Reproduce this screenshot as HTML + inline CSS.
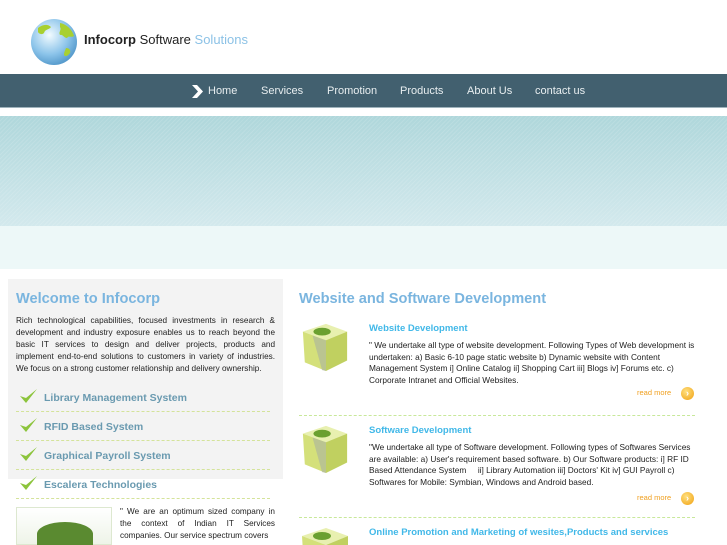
<!DOCTYPE html>
<html><head><meta charset="utf-8"><style>
*{margin:0;padding:0;box-sizing:border-box}
html,body{width:727px;height:545px;overflow:hidden}
body{background:#fff;font-family:"Liberation Sans",sans-serif;position:relative}
.abs{position:absolute}
.nav{left:0;top:74px;width:727px;height:34px;background:#42606f;border-bottom:1px solid #9fb3bc}
.nav span{position:absolute;top:10px;color:#e8eef0;font-size:11px}
.band{left:0;top:116px;width:727px;height:110px;background:repeating-linear-gradient(135deg,rgba(255,255,255,.12) 0 1px,transparent 1px 3px),linear-gradient(#afd7db,#d3e9ed)}
.band2{left:0;top:226px;width:727px;height:43px;background:#edf8f8}
.left{left:8px;top:279px;width:275px;height:200px;background:#f3f3f3}
h1{font-size:14.6px;color:#7ab5df;font-weight:bold;white-space:nowrap}
.p{font-size:8.2px;line-height:12px;color:#222;text-align:justify}
.li{left:16px;width:254px;height:29px;border-bottom:1px dashed #d4e39a}
.li b{position:absolute;left:28px;top:9px;font-size:10.5px;color:#6a9ab0}
.li svg{position:absolute;left:2px;top:4px}
.box{width:50px;height:50px}
.st{font-size:9.5px;color:#41b8e8;font-weight:bold}
.rp{font-size:8.3px;line-height:11.5px;color:#222;text-align:left}
.rm{font-size:7.5px;color:#f0a020}
.dot{width:13px;height:13px;border-radius:50%;background:radial-gradient(circle at 40% 35%,#ffe080,#f0a010);color:#fff;font-size:9px;line-height:13px;text-align:center;font-weight:bold}
.hr{left:299px;width:396px;border-top:1px dashed #c8e89a}
</style></head><body>
<svg class="abs" style="left:30px;top:18px" width="48" height="48" viewBox="0 0 48 48"><defs><radialGradient id="g" cx=".4" cy=".35" r=".7"><stop offset="0" stop-color="#f2fbff"/><stop offset=".6" stop-color="#8cc4ea"/><stop offset="1" stop-color="#4f95c8"/></radialGradient></defs><circle cx="24" cy="24" r="23" fill="url(#g)"/><path d="M8 10c5-4 10-4 13-1-2 3-6 2-7 6-2 2-5 1-6-1z" fill="#a8d030"/><path d="M30 5c6 1 12 6 14 13-3 2-5-1-7 2-3 0-4-4-7-3-2-3 2-5 0-8z" fill="#a8d030"/><path d="M36 30c3 0 5 2 4 5-2 3-5 4-6 2 0-3 1-4 2-7z" fill="#a8d030"/></svg>
<div class="abs" style="left:84px;top:32px;font-size:13px;color:#222;white-space:nowrap"><b>Infocorp</b> Software <span style="color:#8cc2e6">Solutions</span></div>
<div class="abs nav">
<svg style="position:absolute;left:191px;top:10px" width="13" height="15" viewBox="0 0 13 15"><path d="M1 1h5l6 6.5-6 6.5H1l6-6.5z" fill="#fff"/></svg>
<span style="left:208px;top:11px">Home</span><span style="left:261px;top:11px">Services</span><span style="left:327px;top:11px">Promotion</span><span style="left:400px;top:11px">Products</span><span style="left:467px;top:11px">About Us</span><span style="left:535px;top:11px">contact us</span></div>
<div class="abs band"></div><div class="abs band2"></div>
<div class="abs left"></div>
<h1 class="abs" style="left:16px;top:291px">Welcome to Infocorp</h1>
<div class="abs p" style="left:16px;top:315px;width:259px">Rich technological capabilities, focused investments in research &amp; development and industry exposure enables us to reach beyond the basic IT services to design and deliver projects, products and implement end-to-end solutions to customers in variety of industries. We focus on a strong customer relationship and delivery ownership.</div>
<div class="abs li" style="top:383px"><svg width="20" height="18"><path d="M2 9l6 7L19 2l-11 9z" fill="#8cc43c"/></svg><b>Library Management System</b></div>
<div class="abs li" style="top:412px"><svg width="20" height="18"><path d="M2 9l6 7L19 2l-11 9z" fill="#8cc43c"/></svg><b>RFID Based System</b></div>
<div class="abs li" style="top:441px"><svg width="20" height="18"><path d="M2 9l6 7L19 2l-11 9z" fill="#8cc43c"/></svg><b>Graphical Payroll System</b></div>
<div class="abs li" style="top:470px"><svg width="20" height="18"><path d="M2 9l6 7L19 2l-11 9z" fill="#8cc43c"/></svg><b>Escalera Technologies</b></div>
<div class="abs" style="left:16px;top:507px;width:96px;height:38px;border:1px solid #dde8d0;background:linear-gradient(#fff,#eef4e8)"><div style="position:absolute;left:20px;top:14px;width:56px;height:24px;background:#5a8a30;border-radius:50% 50% 0 0"></div></div>
<div class="abs p" style="left:120px;top:506px;width:155px">" We are an optimum sized company in the context of Indian IT Services companies. Our service spectrum covers</div>
<h1 class="abs" style="left:299px;top:291px">Website and Software Development</h1>
<svg class="abs box" style="left:300px;top:322px" viewBox="0 0 50 52"><path d="M2 10l24-8 22 8-22 9z" fill="#e8f0b0"/><path d="M2 10l24 9v32L4 42z" fill="#d4e07a"/><path d="M26 19l22-9v30L26 51z" fill="#c0d060"/><path d="M12 14l14 5v32l-4-1z" fill="#a8b0a0" opacity=".6"/><ellipse cx="22" cy="10" rx="9" ry="4" fill="#6aa030"/></svg>
<svg class="abs box" style="left:300px;top:424px" viewBox="0 0 50 52"><path d="M2 10l24-8 22 8-22 9z" fill="#e8f0b0"/><path d="M2 10l24 9v32L4 42z" fill="#d4e07a"/><path d="M26 19l22-9v30L26 51z" fill="#c0d060"/><path d="M12 14l14 5v32l-4-1z" fill="#a8b0a0" opacity=".6"/><ellipse cx="22" cy="10" rx="9" ry="4" fill="#6aa030"/></svg>
<svg class="abs box" style="left:300px;top:526px;height:19px" viewBox="0 0 50 19" preserveAspectRatio="xMinYMin slice"><path d="M2 10l24-8 22 8-22 9z" fill="#e8f0b0"/><path d="M2 10l24 9v32L4 42z" fill="#d4e07a"/><path d="M26 19l22-9v30L26 51z" fill="#c0d060"/><ellipse cx="22" cy="10" rx="9" ry="4" fill="#6aa030"/></svg>
<div class="abs st" style="left:369px;top:323px">Website Development</div>
<div class="abs rp" style="left:369px;top:340px;width:326px">" We undertake all type of website development. Following Types of Web development is undertaken: a) Basic 6-10 page static website b) Dynamic website with Content Management System i] Online Catalog ii] Shopping Cart iii] Blogs iv] Forums etc. c) Corporate Intranet and Official Websites.</div>
<div class="abs rm" style="left:637px;top:388px">read more</div><div class="abs dot" style="left:681px;top:387px">›</div>
<div class="abs hr" style="top:415px"></div>
<div class="abs st" style="left:369px;top:425px">Software Development</div>
<div class="abs rp" style="left:369px;top:442px;width:326px">"We undertake all type of Software development. Following types of Softwares Services are available: a) User's requirement based software. b) Our Software products: i] RF ID Based Attendance System &nbsp;&nbsp;&nbsp;&nbsp;ii] Library Automation iii] Doctors' Kit iv] GUI Payroll c) Softwares for Mobile: Symbian, Windows and Android based.</div>
<div class="abs rm" style="left:637px;top:493px">read more</div><div class="abs dot" style="left:681px;top:492px">›</div>
<div class="abs hr" style="top:517px"></div>
<div class="abs st" style="left:369px;top:527px">Online Promotion and Marketing of wesites,Products and services</div>
</body></html>
